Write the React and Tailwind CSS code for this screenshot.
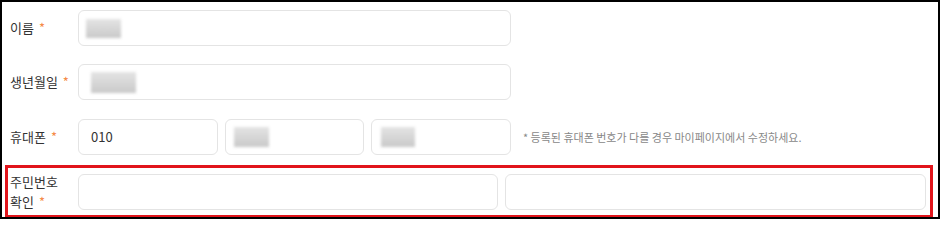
import React from 'react'

const font = { fontFamily: '"Noto Sans CJK KR", "Noto Sans", sans-serif' }

function Label({ children }) {
  return (
    <div className="w-[68px] shrink-0 text-[13px] leading-[20px] text-[#333]">
      {children}
    </div>
  )
}

const Star = () => <span className="ml-[5px] text-[#f58a48]">*</span>

function Blur({ w, h, className = '' }) {
  return <div className={`bg-gradient-to-b from-[#e4e4e4] to-[#c9c9c9] blur-[1.5px] ${className}`} style={{ width: w, height: h }} />
}

function Field({ className = '', children }) {
  return (
    <div className={`h-[36px] rounded-[6px] border border-[#e4e4e4] bg-white flex items-center px-[12px] text-[13px] text-[#333] ${className}`}>
      {children}
    </div>
  )
}

export default function App() {
  return (
    <div style={font} className="w-[940px] h-[219px] box-border border-2 border-black bg-white pl-[3px] pr-[5px] pt-[8px] overflow-hidden">
      {/* 이름 */}
      <div className="flex items-center pl-[5px]">
        <Label>이름<Star /></Label>
        <Field className="w-[433px] pl-[7px]"><Blur w={35} h={19} /></Field>
      </div>

      {/* 생년월일 */}
      <div className="flex items-center pl-[5px] mt-[18px]">
        <Label>생년월일<Star /></Label>
        <Field className="w-[433px]"><Blur w={45} h={21} /></Field>
      </div>

      {/* 휴대폰 */}
      <div className="flex items-center pl-[5px] mt-[19px]">
        <Label>휴대폰<Star /></Label>
        <div className="flex gap-[7px]">
          <Field className="w-[140px]">010</Field>
          <Field className="w-[139px] pl-[8px]"><Blur w={35} h={20} /></Field>
          <Field className="w-[140px] pl-[9px]"><Blur w={34} h={20} /></Field>
        </div>
        <p className="ml-[12px] text-[11px] text-[#888]">* 등록된 휴대폰 번호가 다를 경우 마이페이지에서 수정하세요.</p>
      </div>

      {/* 주민번호 확인 */}
      <div className="mt-[10px] flex items-center border-[3px] border-[#e1141b] pl-[2px] pr-[4px] pt-[4px] pb-[3px]">
        <Label>주민번호<br />확인<Star /></Label>
        <div className="flex gap-[7px]">
          <Field className="w-[420px] border-[#e3e6ec]" />
          <Field className="w-[421px] border-[#e3e6ec]" />
        </div>
      </div>
    </div>
  )
}
